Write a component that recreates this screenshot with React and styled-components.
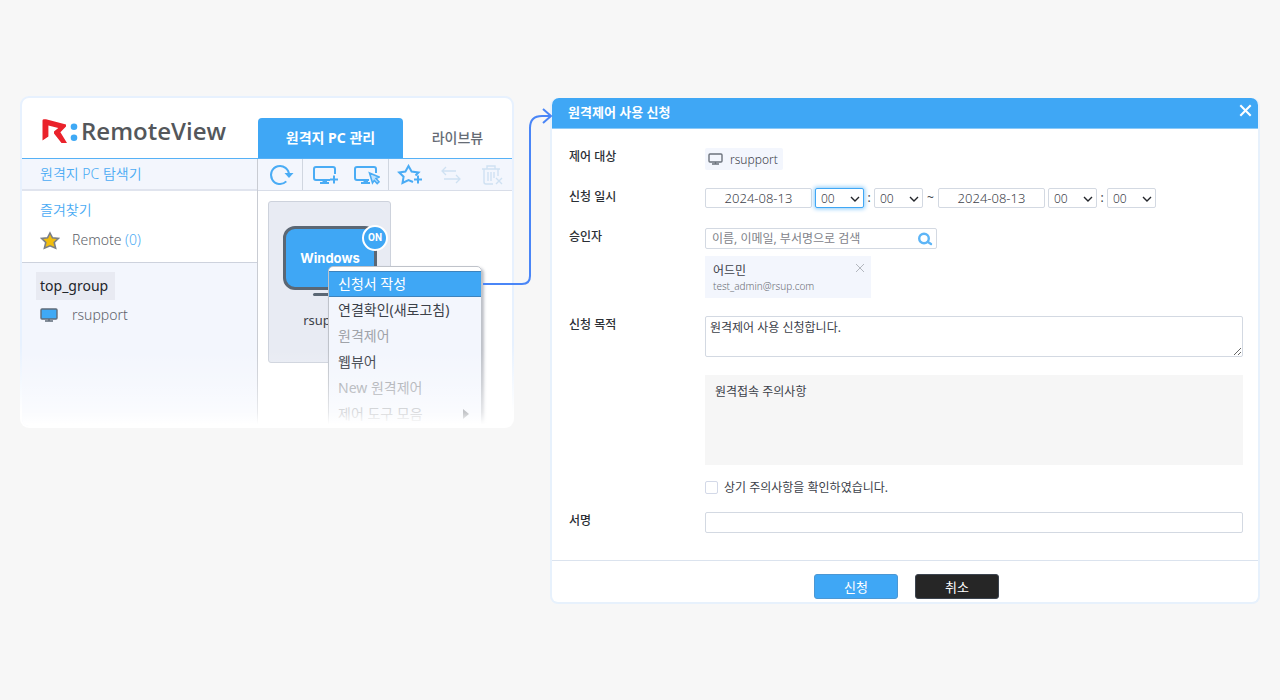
import React, { useState } from 'react';
import styled, { createGlobalStyle, css } from 'styled-components';

const HOURS = Array.from({ length: 24 }, (_, i) => String(i).padStart(2, '0'));
const MINUTES = ['00', '10', '20', '30', '40', '50'];

const MENU_ITEMS = [
  { label: '신청서 작성', active: true },
  { label: '연결확인(새로고침)' },
  { label: '원격제어', disabled: true },
  { label: '웹뷰어' },
  { label: 'New 원격제어', disabled: true },
  { label: '제어 도구 모음', disabled: true, submenu: true },
];

const LogoMark = () => (
  <svg width='38' height='26' viewBox='0 0 38 26' aria-hidden='true'>
    <path
      d='M1.5 2.6 Q1.6 1.2 3 1.2 L5 1.3 L25 6.4 V8.6 L19.4 14.3 L26 25 H20.5 L13 15.6 V13.6 L17.3 10 L7.4 7.4 V18.6 L1.5 22.4 Z'
      fill='#ea222b'
    />
    <circle cx='33' cy='8.7' r='3.3' fill='#3fa9f5' />
    <circle cx='33' cy='19.7' r='3.3' fill='#3fa9f5' />
  </svg>
);

const ToolIcon = ({ children, width = 26 }) => (
  <svg
    width={width}
    height='22'
    viewBox={`0 0 ${width} 22`}
    fill='none'
    stroke='currentColor'
    strokeWidth='2'
    aria-hidden='true'
  >
    {children}
  </svg>
);

const RefreshIcon = () => (
  <ToolIcon>
    <path d='M18.3 17.4 A9 9 0 1 1 21 11' />
    <path d='M16.5 9 H25.5 L21 14 Z' fill='currentColor' stroke='none' />
  </ToolIcon>
);

const MonitorPlusIcon = () => (
  <ToolIcon>
    <path d='M17 16 H3 Q1 16 1 14 V5 Q1 3 3 3 H20 Q22 3 22 5 V10' />
    <path d='M7 19 H16 M9.5 17.5 H14 M17 15.5 H25 M21 11.5 V19.5' />
  </ToolIcon>
);

const MonitorCursorIcon = () => (
  <ToolIcon>
    <path d='M15 16 H3 Q1 16 1 14 V5 Q1 3 3 3 H20 Q22 3 22 5 V9' />
    <path d='M7 19 H16 M9.5 17.5 H14' />
    <path d='M15.5 9 L25 13 L22 14.5 L25 17.8 L23.2 19.5 L20.3 16.4 L18.5 19 Z' fill='#bfe1fc' strokeWidth='1.6' />
  </ToolIcon>
);

const StarPlusIcon = () => (
  <ToolIcon>
    <path d='M16 18 L11.5 16 L5.5 19 L6.6 12.7 L2.2 8.5 L8.4 7.6 L11.5 2 L14.6 7.6 L21.5 8.5 L18.5 11.5' />
    <path d='M17 15.5 H25 M21 11.5 V19.5' />
  </ToolIcon>
);

const SwapIcon = () => (
  <ToolIcon>
    <path d='M18 7 H4 M8 3 L4 7 L8 11 M6 15 H22 M18 11 L22 15 L18 19' strokeWidth='1.3' />
  </ToolIcon>
);

const TrashIcon = () => (
  <ToolIcon>
    <path d='M3 5 H21 M8 5 V2 H16 V5 M5 5 V18 Q5 20 7 20 H14 M19 5 V12 M9 8 V17 M12 8 V17 M15 8 V14' strokeWidth='1.4' />
    <path d='M17 14 L23 20 M23 14 L17 20' strokeWidth='1.4' />
  </ToolIcon>
);

const FavoriteIcon = () => (
  <svg width='20' height='19' viewBox='0 0 20 19' aria-hidden='true'>
    <path
      d='M10 2 L12.5 6.8 L18.4 7.4 L14.2 11.5 L15.6 17.2 L10 14.8 L4.4 17.2 L5.8 11.5 L1.6 7.4 L7.5 6.8 Z'
      fill='#f1bd0e'
      stroke='#7b7f86'
      strokeWidth='1.6'
    />
  </svg>
);

const DeviceIcon = () => (
  <svg width='18' height='14' viewBox='0 0 18 14' aria-hidden='true'>
    <rect x='1' y='1' width='16' height='10' rx='1' fill='#3fa9f5' stroke='#5f6b78' strokeWidth='1.4' />
    <path d='M9 11 V13 M5 13 H13' stroke='#5f6b78' strokeWidth='1.4' />
  </svg>
);

const TargetIcon = () => (
  <svg width='15' height='12' viewBox='0 0 15 12' fill='none' stroke='#6c737c' strokeWidth='1.4' aria-hidden='true'>
    <rect x='1' y='1' width='13' height='8' rx='1' />
    <path d='M7.5 9 V11 M4 11 H11' />
  </svg>
);

const SearchIcon = () => (
  <svg width='16' height='14' viewBox='0 0 16 14' fill='none' stroke='#5db5f7' strokeWidth='2.4' aria-hidden='true'>
    <circle cx='7' cy='6.5' r='4.8' />
    <path d='M10.5 9.8 L14 12' strokeLinecap='round' />
  </svg>
);

const CrossIcon = ({ size, weight }) => (
  <svg width={size} height={size} viewBox='0 0 10 10' fill='none' stroke='currentColor' strokeWidth={weight} aria-hidden='true'>
    <path d='M1 1 L9 9 M9 1 L1 9' />
  </svg>
);

const RemotePanel = () => (
  <PanelShell>
    <Panel>
      <PanelHeader>
        <Logo>
          <LogoMark />
          RemoteView
        </Logo>
        <Tabs>
          <Tab $active>원격지 PC 관리</Tab>
          <Tab>라이브뷰</Tab>
        </Tabs>
      </PanelHeader>
      <PanelBody>
        <Sidebar>
          <SidebarTitle>원격지 PC 탐색기</SidebarTitle>
          <Favorites>
            <SectionTitle>즐겨찾기</SectionTitle>
            <TreeItem>
              <FavoriteIcon />
              <span>
                Remote <Count>(0)</Count>
              </span>
            </TreeItem>
          </Favorites>
          <Tree>
            <GroupName>top_group</GroupName>
            <TreeItem>
              <DeviceIcon />
              <span>rsupport</span>
            </TreeItem>
          </Tree>
        </Sidebar>
        <Workspace>
          <Toolbar>
            <ToolGroup>
              <ToolButton aria-label='새로고침'><RefreshIcon /></ToolButton>
            </ToolGroup>
            <ToolGroup>
              <ToolButton aria-label='PC 추가'><MonitorPlusIcon /></ToolButton>
              <ToolButton aria-label='PC 선택'><MonitorCursorIcon /></ToolButton>
            </ToolGroup>
            <ToolGroup>
              <ToolButton aria-label='즐겨찾기 추가'><StarPlusIcon /></ToolButton>
              <ToolButton aria-label='이동' disabled><SwapIcon /></ToolButton>
              <ToolButton aria-label='삭제' disabled><TrashIcon /></ToolButton>
            </ToolGroup>
          </Toolbar>
          <DeviceArea>
            <DeviceTile>
              <Screen>
                Windows
                <Badge>ON</Badge>
              </Screen>
              <Stand />
              <DeviceName>rsupport</DeviceName>
              <ContextMenu>
                {MENU_ITEMS.map((item) => (
                  <li key={item.label}>
                    <MenuButton $active={item.active} disabled={item.disabled}>
                      {item.label}
                      {item.submenu && <SubmenuArrow />}
                    </MenuButton>
                  </li>
                ))}
              </ContextMenu>
            </DeviceTile>
          </DeviceArea>
        </Workspace>
      </PanelBody>
      <Fade />
    </Panel>
  </PanelShell>
);

const TimeSelect = ({ label, options, focused }) => (
  <SelectWrapper>
    <Select aria-label={label} defaultValue='00' $focused={focused}>
      {options.map((value) => (
        <option key={value}>{value}</option>
      ))}
    </Select>
    <Chevron width='10' height='6' viewBox='0 0 10 6' aria-hidden='true'>
      <path d='M1 1 L5 5 L9 1' />
    </Chevron>
  </SelectWrapper>
);

const RequestDialog = () => {
  const [agreed, setAgreed] = useState(false);

  return (
    <Dialog>
      <DialogHeader>
        <DialogTitle>원격제어 사용 신청</DialogTitle>
        <CloseButton aria-label='닫기'>
          <CrossIcon size={13} weight={1.6} />
        </CloseButton>
      </DialogHeader>
      <Form onSubmit={(e) => e.preventDefault()}>
        <Fields>
          <FieldLabel as='span'>제어 대상</FieldLabel>
          <FieldBody>
            <TargetChip>
              <TargetIcon />
              rsupport
            </TargetChip>
          </FieldBody>

          <FieldLabel htmlFor='start-date'>신청 일시</FieldLabel>
          <DateRow>
            <DateInput id='start-date' defaultValue='2024-08-13' />
            <TimeSelect label='시작 시' options={HOURS} focused />
            <Separator>:</Separator>
            <TimeSelect label='시작 분' options={MINUTES} />
            <Separator $wide>~</Separator>
            <DateInput aria-label='종료일' defaultValue='2024-08-13' />
            <TimeSelect label='종료 시' options={HOURS} />
            <Separator>:</Separator>
            <TimeSelect label='종료 분' options={MINUTES} />
          </DateRow>

          <FieldLabel htmlFor='approver'>승인자</FieldLabel>
          <FieldBody>
            <SearchBox>
              <SearchInput id='approver' placeholder='이름, 이메일, 부서명으로 검색' />
              <IconButton type='button' aria-label='검색'><SearchIcon /></IconButton>
            </SearchBox>
            <ApproverCard>
              <div>
                <ApproverName>어드민</ApproverName>
                <ApproverMail>test_admin@rsup.com</ApproverMail>
              </div>
              <IconButton type='button' aria-label='승인자 삭제'>
                <CrossIcon size={10} weight={1} />
              </IconButton>
            </ApproverCard>
          </FieldBody>

          <FieldLabel htmlFor='purpose'>신청 목적</FieldLabel>
          <FieldBody>
            <TextArea id='purpose' defaultValue='원격제어 사용 신청합니다.' />
            <Notice>원격접속 주의사항</Notice>
            <Consent>
              <Checkbox
                type='checkbox'
                checked={agreed}
                onChange={(e) => setAgreed(e.target.checked)}
              />
              상기 주의사항을 확인하였습니다.
            </Consent>
          </FieldBody>

          <FieldLabel htmlFor='signature'>서명</FieldLabel>
          <FieldBody>
            <SignatureInput id='signature' />
          </FieldBody>
        </Fields>
        <DialogFooter>
          <ActionButton type='submit' $primary>신청</ActionButton>
          <ActionButton type='button'>취소</ActionButton>
        </DialogFooter>
      </Form>
    </Dialog>
  );
};

const App = () => (
  <>
    <GlobalStyle />
    <Page>
      <RemotePanel />
      <Gutter>
        <Connector width='74' height='184' viewBox='0 0 74 184' aria-hidden='true'>
          <path d='M3 176 H42 Q50 176 50 168 V20 Q50 8 62 8 H70' />
          <path d='M63 1 L71 8 L63 15' />
        </Connector>
      </Gutter>
      <RequestDialog />
    </Page>
  </>
);

const GlobalStyle = createGlobalStyle`
  * {
    box-sizing: border-box;
  }
  body {
    margin: 0;
    background: #f7f7f7;
    color: #3c4149;
    font-family: 'Noto Sans', 'Noto Sans CJK KR', sans-serif;
    font-size: 12px;
  }
  button, input, select, textarea {
    font-family: inherit;
    font-size: inherit;
    color: inherit;
    margin: 0;
  }
  button {
    border: 0;
    padding: 0;
    background: none;
    cursor: pointer;
  }
  svg {
    display: block;
    flex: none;
  }
`;

const Page = styled.main`
  display: grid;
  grid-template-columns: minmax(0, 494fr) 36px minmax(0, 710fr);
  align-items: start;
  padding: 96px 20px;
`;

const PanelShell = styled.section`
  padding: 2px;
  border-radius: 9px;
  background: linear-gradient(#e7f1fe 75%, #ffffff 95%);
`;

const Panel = styled.div`
  position: relative;
  overflow: hidden;
  border-radius: 7px;
  background: #ffffff;
`;

const PanelHeader = styled.header`
  display: flex;
  align-items: flex-end;
  height: 61px;
  border-bottom: 1px solid #56b1f6;
`;

const Logo = styled.div`
  display: flex;
  flex: none;
  align-items: center;
  align-self: center;
  gap: 2px;
  width: 236px;
  padding: 6px 0 0 19px;
  color: #54575b;
  font-family: 'Open Sans', 'Noto Sans', sans-serif;
  font-size: 24px;
  font-weight: 600;
  line-height: 32px;
`;

const Tabs = styled.nav`
  display: flex;
  flex: 1;
`;

const Tab = styled.button`
  flex: 1;
  height: 40px;
  padding-bottom: 2px;
  font-size: 14px;
  font-weight: 500;
  color: #666c75;
  ${({ $active }) => $active && css`
    flex: none;
    width: 145px;
    border-radius: 4px 4px 0 0;
    background: #3fa7f5;
    color: #ffffff;
    font-weight: 700;
  `}
`;

const PanelBody = styled.div`
  display: flex;
`;

const Sidebar = styled.aside`
  display: flex;
  flex: none;
  flex-direction: column;
  width: 236px;
  border-right: 1px solid #c9ccd3;
`;

const SidebarTitle = styled.h2`
  height: 32px;
  margin: 0;
  padding: 0 18px;
  border-bottom: 2px solid #e0e4ee;
  background: #f3f6fd;
  color: #4babf4;
  font-size: 14px;
  font-weight: 350;
  line-height: 30px;
`;

const Favorites = styled.div`
  padding: 9px 18px 12px;
  border-bottom: 1px solid #cdd2dd;
`;

const SectionTitle = styled.h3`
  margin: 0 0 10px;
  color: #4babf4;
  font-size: 14px;
  font-weight: 350;
  line-height: 20px;
`;

const TreeItem = styled.div`
  display: grid;
  grid-template-columns: 32px 1fr;
  align-items: center;
  color: #5d6269;
  font-size: 14px;
  font-weight: 300;
  line-height: 20px;
`;

const Count = styled.span`
  color: #4babf4;
`;

const Tree = styled.div`
  flex: 1;
  padding: 9px 18px;
  background: #f3f6fd;
`;

const GroupName = styled.div`
  width: fit-content;
  margin: 0 0 5px -4px;
  padding: 4px 7px 4px 4px;
  background: #e8eaf2;
  color: #22252a;
  font-size: 14px;
  line-height: 20px;
`;

const Workspace = styled.div`
  flex: 1;
  min-width: 0;
`;

const Toolbar = styled.div`
  display: flex;
  height: 32px;
  border-bottom: 1px solid #d8dde8;
  background: #f3f6fd;
`;

const ToolGroup = styled.div`
  display: flex;
  padding: 0 1px 0 2px;
  & + & {
    border-left: 1px solid #d0d6e0;
  }
  &:last-child {
    padding: 0;
  }
`;

const ToolButton = styled.button`
  display: flex;
  align-items: center;
  justify-content: center;
  width: 41px;
  color: #4aacf5;
  &:disabled {
    color: #cfe1f2;
    cursor: default;
  }
`;

const DeviceArea = styled.div`
  padding: 10px 10px 63px;
`;

const DeviceTile = styled.div`
  position: relative;
  width: 123px;
  height: 162px;
  padding: 24px 13px 24px 14px;
  border: 1px solid #cdd2dc;
  border-radius: 3px;
  background: #e8ebf3;
`;

const Screen = styled.div`
  position: relative;
  display: flex;
  align-items: center;
  justify-content: center;
  height: 64px;
  border: 3px solid #5b6774;
  border-radius: 12px;
  background: #3fa7f5;
  color: #ffffff;
  font-family: Inter, sans-serif;
  font-size: 13px;
  font-weight: 700;
`;

const Badge = styled.span`
  position: absolute;
  top: -4px;
  right: -14px;
  width: 26px;
  height: 26px;
  border: 2px solid #ffffff;
  border-radius: 50%;
  background: #3fa7f5;
  font-family: Roboto, sans-serif;
  font-size: 10px;
  font-weight: 700;
  line-height: 22px;
  text-align: center;
`;

const Stand = styled.div`
  width: 34px;
  height: 3px;
  margin: 3px auto 15px;
  border-radius: 2px;
  background: #5b6774;
`;

const DeviceName = styled.div`
  font-size: 13px;
  line-height: 18px;
  text-align: center;
`;

const ContextMenu = styled.ul`
  position: absolute;
  top: 64px;
  left: 59px;
  z-index: 1;
  width: 154px;
  margin: 0;
  padding: 4px 0;
  border: 1px solid #bfc3ca;
  border-radius: 5px;
  background: linear-gradient(#ffffff 4px, #f3f6fd 4px);
  box-shadow: 2px 2px 3px rgba(60, 70, 90, 0.35);
  list-style: none;
`;

const MenuButton = styled.button`
  display: flex;
  align-items: center;
  justify-content: space-between;
  width: 100%;
  height: 26px;
  padding: 0 12px 0 9px;
  border: solid transparent;
  border-width: 1px 0;
  font-size: 14px;
  line-height: 20px;
  &:disabled {
    color: #a0a3a9;
    cursor: default;
  }
  ${({ $active }) => $active && css`
    border-color: #3d83bd;
    background: #3fa7f5;
    color: #ffffff;
  `}
`;

const SubmenuArrow = styled.span`
  border: solid transparent;
  border-width: 5px 0 5px 6px;
  border-left-color: #6b7078;
`;

const Fade = styled.div`
  position: absolute;
  inset: auto 0 0;
  z-index: 2;
  height: 76px;
  background: linear-gradient(
    rgba(255, 255, 255, 0),
    rgba(255, 255, 255, 0.25) 45%,
    rgba(255, 255, 255, 0.6) 82%,
    #ffffff 98%
  );
  pointer-events: none;
`;

const Gutter = styled.div`
  position: relative;
  align-self: stretch;
`;

const Connector = styled.svg`
  position: absolute;
  top: 12px;
  left: -34px;
  z-index: 3;
  fill: none;
  stroke: #4a86f7;
  stroke-width: 2;
`;

const Dialog = styled.section`
  margin-top: 2px;
  border: solid #e7f1fc;
  border-width: 0 2px 2px;
  border-radius: 8px;
  background: #ffffff;
`;

const DialogHeader = styled.header`
  display: flex;
  justify-content: space-between;
  height: 31px;
  padding: 0 6px 0 16px;
  border-bottom: 1px solid #8ccaf8;
  border-radius: 7px 7px 0 0;
  background: #3fa7f5;
  color: #ffffff;
`;

const DialogTitle = styled.h1`
  margin: 0;
  font-size: 13px;
  font-weight: 700;
  line-height: 29px;
`;

const CloseButton = styled.button`
  display: flex;
  align-items: center;
  height: 24px;
`;

const Form = styled.form`
  margin: 0;
`;

const Fields = styled.div`
  display: grid;
  grid-template-columns: 136px minmax(0, 1fr);
  row-gap: 18px;
  padding: 19px 15px 27px 17px;
`;

const FieldLabel = styled.label`
  font-weight: 500;
  line-height: 17px;
  color: #2b2f35;
`;

const FieldBody = styled.div`
  min-width: 0;
`;

const inputStyle = css`
  height: 21px;
  border: 1px solid #d3d9e2;
  border-radius: 2px;
  background: #ffffff;
`;

const TargetChip = styled.div`
  display: flex;
  align-items: center;
  gap: 7px;
  width: fit-content;
  height: 22px;
  padding: 0 5px 0 3px;
  border-radius: 2px;
  background: #f3f6fd;
  font-weight: 300;
`;

const DateRow = styled.div`
  display: flex;
  align-items: flex-start;
  height: 22px;
  line-height: 20px;
`;

const DateInput = styled.input`
  ${inputStyle}
  width: 107px;
  height: 20px;
  margin-right: 3px;
  padding: 0;
  font-size: 13px;
  font-weight: 300;
  text-align: center;
`;

const SelectWrapper = styled.div`
  position: relative;
  width: 49px;
`;

const Select = styled.select`
  ${inputStyle}
  display: block;
  width: 100%;
  height: 20px;
  padding: 0 5px;
  font-weight: 300;
  appearance: none;
  ${({ $focused }) => $focused && css`
    border-color: #3fa7f5;
    box-shadow: 0 0 4px 1px #8ccbfa;
  `}
`;

const Chevron = styled.svg`
  position: absolute;
  top: 8px;
  right: 4px;
  fill: none;
  stroke: #22252a;
  stroke-width: 1.4;
  pointer-events: none;
`;

const Separator = styled.span`
  width: ${({ $wide }) => ($wide ? 15 : 10)}px;
  text-align: center;
`;

const SearchBox = styled.div`
  ${inputStyle}
  display: flex;
  align-items: center;
  width: 232px;
  padding-right: 3px;
`;

const SearchInput = styled.input`
  flex: 1;
  min-width: 0;
  padding: 0 6px;
  border: 0;
  outline: 0;
  background: none;
  &::placeholder {
    color: #7e8289;
    opacity: 1;
  }
`;

const IconButton = styled.button`
  display: flex;
  color: #b3b7be;
`;

const ApproverCard = styled.div`
  display: flex;
  align-items: flex-start;
  justify-content: space-between;
  width: 166px;
  height: 42px;
  margin-top: 7px;
  padding: 7px 6px 0 8px;
  background: #f3f6fd;
`;

const ApproverName = styled.div`
  line-height: 16px;
`;

const ApproverMail = styled.div`
  color: #6c7077;
  font-size: 10px;
  font-weight: 300;
  line-height: 14px;
`;

const TextArea = styled.textarea`
  ${inputStyle}
  display: block;
  width: 100%;
  height: 41px;
  padding: 2px 4px;
  line-height: 17px;
  resize: vertical;
`;

const Notice = styled.div`
  min-height: 90px;
  margin: 18px 0 16px;
  padding: 8px 10px;
  background: #f6f6f6;
  line-height: 17px;
`;

const Consent = styled.label`
  display: flex;
  align-items: center;
  gap: 6px;
  width: fit-content;
  line-height: 13px;
`;

const Checkbox = styled.input`
  width: 13px;
  height: 13px;
  border: 1px solid #d3d9e8;
  border-radius: 2px;
  background: #ffffff;
  appearance: none;
  &:checked {
    background: #3fa7f5;
  }
`;

const SignatureInput = styled.input`
  ${inputStyle}
  display: block;
  width: 100%;
`;

const DialogFooter = styled.footer`
  display: flex;
  justify-content: center;
  gap: 17px;
  padding: 13px 0 3px 3px;
  border-top: 1px solid #dbe3ee;
`;

const ActionButton = styled.button`
  width: 84px;
  height: 25px;
  border: 1px solid #3c444f;
  border-radius: 3px;
  background: #262626;
  color: #ffffff;
  font-size: 13px;
  line-height: 18px;
  ${({ $primary }) => $primary && css`
    border-color: #4c97d3;
    background: #3fa7f5;
  `}
`;

export default App;
